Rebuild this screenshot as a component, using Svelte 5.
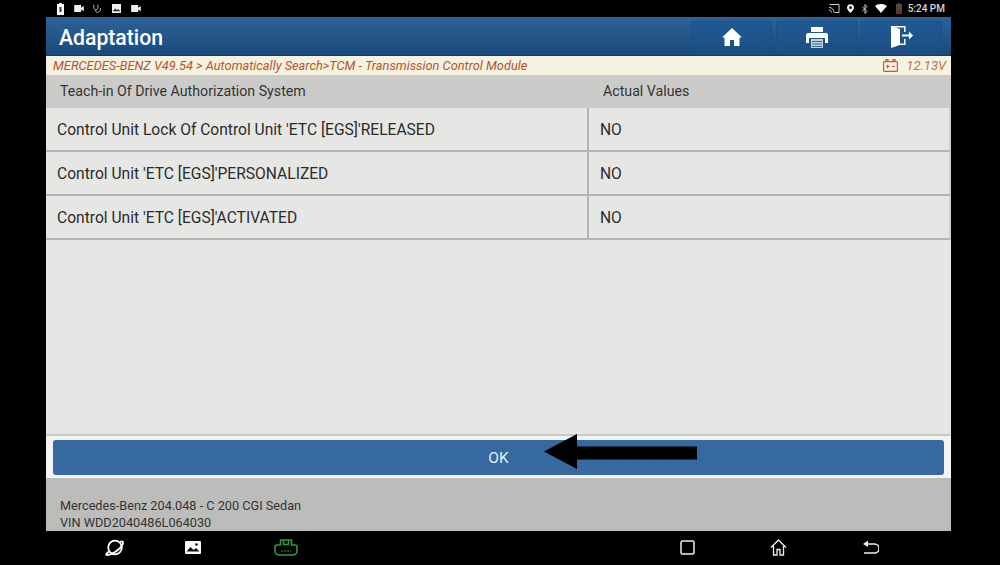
<script>
  const rows = [
    { name: "Control Unit Lock Of Control Unit 'ETC [EGS]'RELEASED", value: 'NO' },
    { name: "Control Unit 'ETC [EGS]'PERSONALIZED", value: 'NO' },
    { name: "Control Unit 'ETC [EGS]'ACTIVATED", value: 'NO' }
  ];
</script>

<div class="screen">
  <div class="status">
    <div class="status-left">
      <svg width="7" height="12" viewBox="0 0 7 12"><path d="M2 0h3v1h2v11H0V1h2z" fill="#fff" /><rect x="2.500" y="4" width="2" height="5" fill="#333" /></svg>
      <svg class="cam" width="10" height="7" viewBox="0 0 11 8"><path d="M0 0h8v3l3-2v6L8 5v3H0z" fill="#eee" /></svg>
      <svg class="steth" width="9" height="9" viewBox="0 0 11 11" fill="none" stroke="#bbb" stroke-width="1.200"><path d="M1 1v3c0 2 1.500 3 2.500 3S6 6 6 4V1M3.500 7v2c0 1 1 1.500 2 1.500S9 9 9 7V5" /></svg>
      <svg class="pic" width="9" height="9" viewBox="0 0 10 10"><rect width="10" height="10" fill="#eee" /><path d="M1 8l2.500-3 2 2 1.500-1.500L9 8z" fill="#222" /></svg>
      <svg class="cam2" width="10" height="7" viewBox="0 0 11 8"><path d="M0 0h8v3l3-2v6L8 5v3H0z" fill="#eee" /></svg>
    </div>
    <div class="status-right">
      <svg width="12" height="9" viewBox="0 0 11 9" fill="none" stroke="#ccc"><path d="M1 .5h9.500v8H6M.5 3.500c3 0 5 2 5 5M.5 6c1.500 0 2.500 1 2.500 2.500" /></svg>
      <svg class="pin" width="7" height="9" viewBox="0 0 8 10"><path fill-rule="evenodd" d="M4 0a4 4 0 0 1 4 4c0 2.500-4 6-4 6S0 6.500 0 4a4 4 0 0 1 4-4zm0 2.500a1.500 1.500 0 1 0 0 3 1.500 1.500 0 0 0 0-3z" fill="#f2f2f2" /></svg>
      <svg class="bt" width="6" height="10" viewBox="0 0 6 10" fill="none" stroke="#ccc"><path d="M0 2.500l5 5L3 9.500V.5l2 2-5 5" /></svg>
      <svg class="wifi" width="12" height="9" viewBox="0 0 12 9"><path d="M0 2c3.500-2.700 8.500-2.700 12 0L6 9z" fill="#fff" /></svg>
      <svg class="batt" width="6" height="11" viewBox="0 0 6 11"><path d="M2 0h2v1h2v10H0V1h2z" fill="#4a4a4a" /><rect y="7" width="6" height="4" fill="#6b2f2a" /></svg>
      <span class="clock">5:24 PM</span>
    </div>
  </div>

  <div class="app">
    <header class="titlebar">
      <h1>Adaptation</h1>
      <div class="tools">
        <button type="button" aria-label="Home">
          <svg width="20" height="20" viewBox="0 0 20 20"><path d="M10 1l10 9.500h-2.500V19H12v-6H8v6H2.500v-8.500H0z" fill="#fff" /></svg>
        </button>
        <button type="button" aria-label="Print">
          <svg width="22" height="21" viewBox="0 0 22 21"><path d="M5 0h12v5H5z" fill="#fff" /><path d="M2 6h18a2 2 0 0 1 2 2v8h-3v-5H3v5H0V8a2 2 0 0 1 2-2z" fill="#fff" /><path d="M5 12h12v9H5z" fill="#c3d0dc" /><path d="M6 14.500h10M6 17h10M6 19.500h10" stroke="#40698f" /></svg>
        </button>
        <button type="button" aria-label="Exit">
          <svg width="22" height="22" viewBox="0 0 22 22"><path d="M0 0l9 3v16l-9 3z" fill="#fff" /><path d="M0 0h14.500v6H13V1.500H4.500L0 .5z" fill="#fff" /><path d="M9 17.500h4V13h1.500v6H9z" fill="#fff" /><path d="M11 8.500h7V5.500l4 4-4 4v-3h-7z" fill="#fff" /></svg>
        </button>
      </div>
    </header>

    <div class="crumb">
      <span>MERCEDES-BENZ V49.54 &gt; Automatically Search&gt;TCM - Transmission Control Module</span>
      <span class="volt">
        <svg width="15" height="13" viewBox="0 0 15 13" fill="none" stroke="#b5603f" stroke-width="1.200"><rect x=".6" y="2.600" width="13.800" height="9.800" rx="1" /><path d="M3 2.500V.6h2v1.900M10 2.500V.6h2v1.900M3 7.500h3.500M4.700 5.800v3.400M9 7.500h3" /></svg>
        12.13V
      </span>
    </div>

    <div class="table-head">
      <div class="col-name">Teach-in Of Drive Authorization System</div>
      <div class="col-value">Actual Values</div>
    </div>

    {#each rows as row}
      <div class="row">
        <div class="cell-name">{row.name}</div>
        <div class="cell-value">{row.value}</div>
      </div>
    {/each}

    <div class="blank"></div>

    <div class="actions">
      <button type="button" class="ok">OK</button>
      <svg class="arrow" width="155" height="36" viewBox="0 0 155 36"><path d="M0 17.500L33 0v12.500h120v13H33V35z" fill="#000" /></svg>
    </div>

    <footer class="vehicle">
      <div>Mercedes-Benz 204.048 - C 200 CGI Sedan</div>
      <div>VIN WDD2040486L064030</div>
    </footer>
  </div>

  <nav class="softkeys">
    <div class="keys-left">
      <svg class="planet" width="20" height="17" viewBox="0 0 20 17" fill="none" stroke="#fff" stroke-width="1.800"><circle cx="10" cy="8.500" r="6.800" /><path d="M4 12.500C1 14.500.5 16 2 16c3 0 8-2.500 12-6 3.500-3 5-7 3.500-7.500-.6-.2-1.500 0-2.500.5" /></svg>
      <svg class="gallery" width="16" height="13" viewBox="0 0 16 13"><rect width="16" height="13" rx="1" fill="#fff" /><path d="M1.500 10.500L5.500 6l3 3 2.500-2 3.500 3.500z" fill="#111" /><circle cx="11.500" cy="3.500" r="1.300" fill="#111" /></svg>
      <svg class="vci" width="24" height="17" viewBox="0 0 24 17" fill="none" stroke="#2f9a45" stroke-width="1.600"><path d="M6.500 1h11v5h3.500a2 2 0 0 1 2 2v4a4 4 0 0 1-4 4H5a4 4 0 0 1-4-4V8a2 2 0 0 1 2-2h3.500z" /><path d="M9.500 1.500v4h5v-4" /><path d="M7 12h10" stroke-width="1.200" stroke-dasharray="2 1" /></svg>
    </div>
    <div class="keys-right">
      <svg width="15" height="15" viewBox="0 0 15 15"><rect x="1" y="1" width="13" height="13" rx="1.500" fill="none" stroke="#eee" stroke-width="1.500" /></svg>
      <svg class="home" width="17" height="17" viewBox="0 0 17 17" fill="none" stroke="#eee" stroke-width="1.300"><path d="M1 8.500L8.500 1 16 8.500M3.500 7v9h3.500v-5.500h3V16h3.500V7" /></svg>
      <svg class="back" width="17" height="14" viewBox="0 0 17 14" fill="none" stroke="#eee" stroke-width="1.500"><path d="M5 4h7.500a4 4 0 0 1 0 9H2" /><path d="M6 .5L1 4l5 3z" fill="#eee" stroke="none" /></svg>
    </div>
  </nav>
</div>

<style>
  :global(body) {
    margin: 0;
    background: #000;
  }

  .screen {
    width: 1000px;
    height: 565px;
    background: #000;
    font-family: Roboto, 'Liberation Sans', sans-serif;
    display: flex;
    flex-direction: column;
    overflow: hidden;
  }

  .status {
    height: 17px;
    padding: 0 55px 0 57px;
    display: flex;
    justify-content: space-between;
    align-items: center;
    flex-shrink: 0;
  }

  .status-left,
  .status-right {
    display: flex;
    align-items: center;
  }

  .status-left svg {
    display: block;
  }

  .cam { margin-left: 10px; }
  .steth { margin-left: 9px; }
  .pic { margin-left: 10px; }
  .cam2 { margin-left: 10px; }

  .pin { margin-left: 7px; }
  .bt { margin-left: 8px; }
  .wifi { margin-left: 7px; }
  .batt { margin-left: 9px; }

  .clock {
    margin-left: 6px;
    font-size: 10px;
    font-weight: 500;
    color: #d6d6d6;
  }

  .app {
    width: 905px;
    height: 514px;
    margin-left: 46px;
    display: flex;
    flex-direction: column;
    flex-shrink: 0;
    background: #e6e7e4;
  }

  .titlebar {
    height: 39px;
    background: linear-gradient(180deg, #2d6298 0%, #1a4a7c 100%);
    border-bottom: 1px solid #123a63;
    box-sizing: border-box;
    display: flex;
    justify-content: space-between;
    padding: 4px 9px 2px 13px;
  }

  h1 {
    margin: 0;
    font-size: 21.200px;
    line-height: 34px;
    font-weight: 500;
    color: #fff;
  }

  .tools {
    display: flex;
    gap: 4px;
  }

  .tools button {
    width: 81px;
    padding: 0;
    border: 1px solid #1d4f80;
    border-radius: 1px;
    background: linear-gradient(180deg, #1f5a92 0%, #1b4f84 100%);
    display: flex;
    align-items: center;
    justify-content: center;
  }

  .crumb {
    height: 19px;
    background: #f6f2e0;
    padding: 0 5px 0 7px;
    display: flex;
    justify-content: space-between;
    align-items: center;
    font-size: 12.800px;
    font-style: italic;
    color: #b5532f;
  }

  .volt {
    display: flex;
    align-items: center;
    gap: 8px;
    color: #b5724f;
    font-size: 13px;
  }

  .table-head {
    height: 33px;
    padding-bottom: 1px;
    box-sizing: border-box;
    background: #cbccc9;
    display: flex;
    align-items: center;
    font-size: 14.200px;
    color: #333;
  }

  .col-name {
    width: 543px;
    padding-left: 14px;
    box-sizing: border-box;
  }

  .col-value {
    padding-left: 14px;
  }

  .row {
    height: 44px;
    box-sizing: border-box;
    border-bottom: 2px solid #b5b6b3;
    border-right: 2px solid #cfd0cd;
    display: flex;
    font-size: 15.600px;
    color: #2b2b2b;
  }

  .cell-name {
    width: 543px;
    box-sizing: border-box;
    padding: 2px 0 0 11px;
    border-right: 2px solid #b5b6b3;
    display: flex;
    align-items: center;
  }

  .cell-value {
    padding: 2px 0 0 11px;
    display: flex;
    align-items: center;
  }

  .blank {
    flex: 1;
    border-bottom: 2px solid #c9cac7;
  }

  .actions {
    position: relative;
    background: #f3f4f2;
    height: 42px;
    box-sizing: border-box;
    padding: 4px 7px 3px;
    flex-shrink: 0;
  }

  .ok {
    display: block;
    width: 100%;
    height: 35px;
    padding: 0;
    border: none;
    border-radius: 3px;
    background: #36699f;
    color: #e8eef4;
    font-family: inherit;
    font-size: 15.500px;
  }

  .arrow {
    position: absolute;
    left: 498px;
    top: -2px;
  }

  .vehicle {
    height: 53px;
    box-sizing: border-box;
    background: #bcbdba;
    padding-top: 19px;
    padding-left: 14px;
    font-size: 12.700px;
    line-height: 17px;
    color: #333;
  }

  .softkeys {
    flex: 1;
    display: flex;
    justify-content: space-between;
    align-items: center;
    padding: 0 121px 2px 105px;
  }

  .keys-left,
  .keys-right {
    display: flex;
    align-items: center;
  }

  .gallery { margin-left: 60px; }
  .vci { margin-left: 73px; }
  .home { margin-left: 75px; }
  .back { margin-left: 75px; }
</style>
